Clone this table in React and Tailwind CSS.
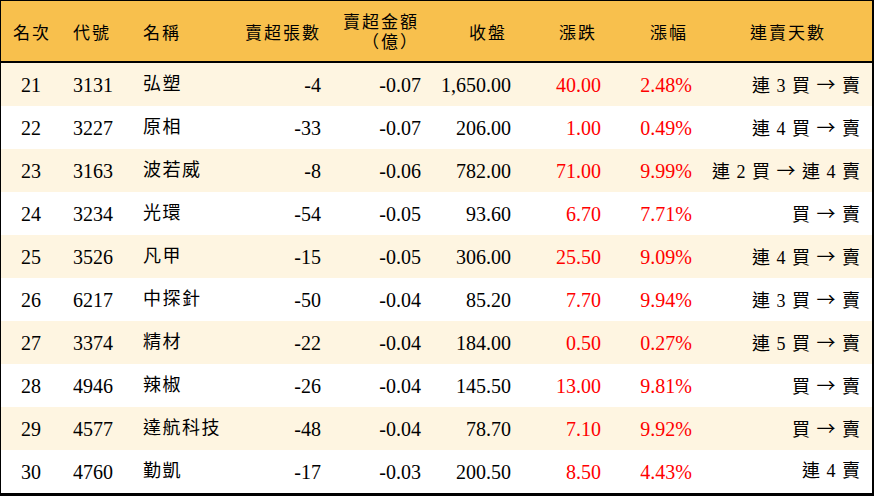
const rows = [
  ["21", "3131", "弘塑", "-4", "-0.07", "1,650.00", "40.00", "2.48%", "連 3 買 → 賣"],
  ["22", "3227", "原相", "-33", "-0.07", "206.00", "1.00", "0.49%", "連 4 買 → 賣"],
  ["23", "3163", "波若威", "-8", "-0.06", "782.00", "71.00", "9.99%", "連 2 買 → 連 4 賣"],
  ["24", "3234", "光環", "-54", "-0.05", "93.60", "6.70", "7.71%", "買 → 賣"],
  ["25", "3526", "凡甲", "-15", "-0.05", "306.00", "25.50", "9.09%", "連 4 買 → 賣"],
  ["26", "6217", "中探針", "-50", "-0.04", "85.20", "7.70", "9.94%", "連 3 買 → 賣"],
  ["27", "3374", "精材", "-22", "-0.04", "184.00", "0.50", "0.27%", "連 5 買 → 賣"],
  ["28", "4946", "辣椒", "-26", "-0.04", "145.50", "13.00", "9.81%", "買 → 賣"],
  ["29", "4577", "達航科技", "-48", "-0.04", "78.70", "7.10", "9.92%", "買 → 賣"],
  ["30", "4760", "勤凱", "-17", "-0.03", "200.50", "8.50", "4.43%", "連 4 賣"],
];

const font = { fontFamily: '"Liberation Serif", "Noto Sans CJK TC", serif' };
const cjk = { fontFamily: '"Noto Sans CJK TC", sans-serif' };

function Head({ className, children }) {
  return (
    <div className={"flex flex-col justify-center text-[17px] leading-[20px] tracking-[2px] " + className}>
      {children}
    </div>
  );
}

// 連賣天數: the arrow is drawn in the CJK face so it comes out full-width
function Days({ text }) {
  const parts = text.split("→");
  return (
    <>
      {parts.map((p, i) => (
        <span key={i}>
          {i > 0 && (
            <span style={cjk} className="text-[19px]">
              →
            </span>
          )}
          {p}
        </span>
      ))}
    </>
  );
}

export default function App() {
  return (
    <div className="w-[874px] h-[496px] bg-white text-black" style={font}>
      <div className="border-t border-l border-r-2 border-b-[3px] border-black">
        <div className="flex h-[62px] bg-[#F8C04D] border-b-2 border-black pt-[6px]">
          <Head className="w-[60px] text-center pl-[2px]">名次</Head>
          <Head className="w-[70px] pl-[12px]">代號</Head>
          <Head className="w-[100px] pl-[12px]">名稱</Head>
          <Head className="w-[90px] text-right mr-[-2px]">賣超張數</Head>
          <Head className="w-[100px] text-right pb-[3px] mr-[-2px]">
            <span>賣超金額</span>
            <span>（億）</span>
          </Head>
          <Head className="w-[90px] text-right">收盤</Head>
          <Head className="w-[90px] text-right">漲跌</Head>
          <Head className="w-[91px] text-right">漲幅</Head>
          <Head className="flex-1 text-center pl-[16px]">連賣天數</Head>
        </div>
        {rows.map((r, i) => (
          <div
            key={r[0]}
            className={"flex h-[43px] items-center text-[20px] " + (i % 2 === 0 ? "bg-[#FEF5E1]" : "bg-white")}
          >
            <div className="w-[60px] text-center">{r[0]}</div>
            <div className="w-[70px] pl-[12px]">{r[1]}</div>
            <div className="w-[100px] pl-[12px] text-[18px] tracking-[1.5px]">{r[2]}</div>
            <div className="w-[90px] text-right">{r[3]}</div>
            <div className="w-[100px] text-right">{r[4]}</div>
            <div className="w-[90px] text-right">{r[5]}</div>
            <div className="w-[90px] text-right text-[#FF0000]">{r[6]}</div>
            <div className="w-[91px] text-right text-[#FF0000]">{r[7]}</div>
            <div className="flex-1 text-right pr-[11px] text-[18px] tracking-[1px] whitespace-pre">
              <Days text={r[8]} />
            </div>
          </div>
        ))}
      </div>
    </div>
  );
}
